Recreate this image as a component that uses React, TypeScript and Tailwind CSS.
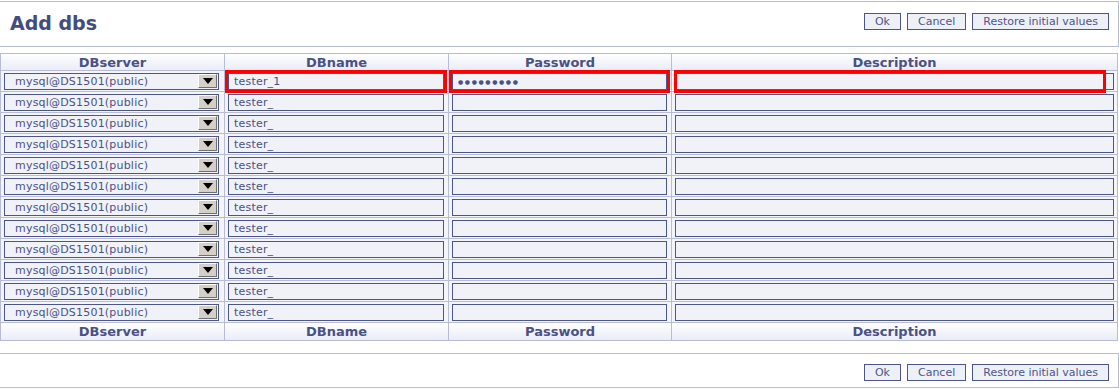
import { useState } from "react";

const rows = Array.from({ length: 12 }, (_, i) => ({
    server: "mysql@DS1501(public)",
    name: i === 0 ? "tester_1" : "tester_",
    password: i === 0 ? "●●●●●●●●●" : "",
    description: "",
}));

const ActionButtons = () => (
    <div className="flex gap-[6px]">
        {["Ok", "Cancel", "Restore initial values"].map((label) => (
            <button
                key={label}
                className="h-[17px] border border-[#4d5688] bg-[#eef0f8] px-[10px] text-[11px] leading-[15px] text-[#4d5688]"
            >
                {label}
            </button>
        ))}
    </div>
);

const HeaderRow = ({ tall }: { tall?: boolean }) => (
    <tr className="bg-gradient-to-b from-white to-[#e9ebf7]">
        {["DBserver", "DBname", "Password", "Description"].map((title) => (
            <th
                key={title}
                className={`${tall ? "h-[18px]" : "h-[17px]"} border border-[#b8bcd6] p-0 text-center text-[13px] font-bold leading-[15px] text-[#4a5185]`}
            >
                {title}
            </th>
        ))}
    </tr>
);

const App = () => {
    const [data] = useState(rows);

    return (
        <div className="min-h-[389px] w-[1119px] bg-white font-['DejaVu_Sans',sans-serif] text-[#4a5185]">
            <div className="mt-[1px] flex h-[46px] items-start justify-between border-y border-r border-[#b8bcd6] pl-[10px] pr-[9px]">
                <h1 className="mt-[9px] text-[19px] font-bold leading-[25px] text-[#414d7e]">Add dbs</h1>
                <div className="mt-[11px]">
                    <ActionButtons />
                </div>
            </div>

            <table className="mt-[6px] w-[1118px] table-fixed border-collapse">
                <colgroup>
                    <col className="w-[224px]" />
                    <col className="w-[224px]" />
                    <col className="w-[223px]" />
                    <col />
                </colgroup>
                <thead>
                    <HeaderRow />
                </thead>
                <tbody>
                    {data.map((row, i) => (
                        <tr key={i} className="h-[21px] bg-[#f4f5fb]">
                            <td className="border border-[#b8bcd6] px-[3px] py-0">
                                <div className="flex h-[17px] w-[215px] items-center border border-[#4d5688] bg-[#f0f2f8]">
                                    <span className="flex-1 pl-[10px] text-[11px] leading-[15px] tracking-[0.2px]">{row.server}</span>
                                    <span className="mr-[1px] flex h-[14px] w-[19px] items-center justify-center border border-t-white border-l-white border-r-[#707070] border-b-[#707070] bg-[#d4d0c8]">
                                        <svg width="10" height="6" viewBox="0 0 10 6">
                                            <path d="M0 0h10L5 6z" fill="#000" />
                                        </svg>
                                    </span>
                                </div>
                            </td>
                            <td className="border border-[#b8bcd6] px-[3px] py-0">
                                <input
                                    readOnly
                                    value={row.name}
                                    className={`block h-[17px] w-[216px] border border-[#4d5688] bg-[#f0f2f8] pl-[5px] text-[11px] tracking-[0.2px] text-[#4a5185] ${i === 0 ? "outline-[3px] outline-[#ff0000] outline-solid" : "outline-none"}`}
                                />
                            </td>
                            <td className="border border-[#b8bcd6] px-[3px] py-0">
                                <input
                                    readOnly
                                    value={row.password}
                                    className={`block h-[17px] w-[215px] border border-[#4d5688] bg-[#f0f2f8] pl-[5px] text-[6px] tracking-[1.6px] text-[#4a5185] ${i === 0 ? "outline-[3px] outline-[#ff0000] outline-solid" : "outline-none"}`}
                                />
                            </td>
                            <td className="border border-[#b8bcd6] px-[3px] py-0">
                                <div className="relative">
                                    <input
                                        readOnly
                                        value={row.description}
                                        className="block h-[17px] w-[439px] border border-[#4d5688] bg-[#f0f2f8] outline-none"
                                    />
                                    {i === 0 && (
                                        <span className="pointer-events-none absolute -top-[3px] -left-[1px] h-[23px] w-[432px] border-[3px] border-[#ff0000]" />
                                    )}
                                </div>
                            </td>
                        </tr>
                    ))}
                </tbody>
                <tfoot>
                    <HeaderRow tall />
                </tfoot>
            </table>

            <div className="mt-[12px] flex h-[35px] items-start justify-end border-y border-r border-[#b8bcd6] pr-[9px]">
                <div className="mt-[10px]">
                    <ActionButtons />
                </div>
            </div>
        </div>
    );
};

export default App;
